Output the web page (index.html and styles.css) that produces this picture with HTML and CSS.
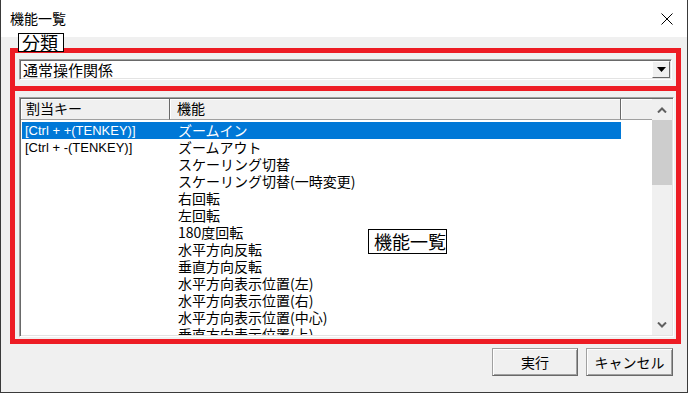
FILE: index.html
```html
<!DOCTYPE html>
<html lang="ja">
<head>
    <meta charset="UTF-8">
    <title>機能一覧</title>
    <link rel="stylesheet" href="styles.css">
</head>
<body>
    <div class="window">
        <div class="titlebar">
            <span class="title">機能一覧</span>
            <svg class="close" width="12" height="12" viewBox="0 0 12 12">
                <path d="M0.5 0.5 L11.5 11.5 M11.5 0.5 L0.5 11.5" stroke="#000" stroke-width="1" fill="none"/>
            </svg>
        </div>

        <div class="content">
            <div class="red-box red-top">
                <div class="combo">
                    <span class="combo-text">通常操作関係</span>
                    <span class="combo-btn">
                        <svg width="9" height="5" viewBox="0 0 9 5"><path d="M0 0 H9 L4.5 5 Z" fill="#000"/></svg>
                    </span>
                </div>
            </div>

            <div class="red-box red-bottom">
                <div class="listview">
                    <div class="list-main">
                        <div class="list-header">
                            <div class="hcol hcol-key">割当キー</div>
                            <div class="hcol hcol-func">機能</div>
                            <div class="hcol hcol-rest"></div>
                        </div>
                        <div class="rows">
                            <div class="row selected"><span class="key">[Ctrl + +(TENKEY)]</span><span class="func">ズームイン</span></div>
                            <div class="row"><span class="key">[Ctrl + -(TENKEY)]</span><span class="func">ズームアウト</span></div>
                            <div class="row"><span class="key"></span><span class="func">スケーリング切替</span></div>
                            <div class="row"><span class="key"></span><span class="func">スケーリング切替(一時変更)</span></div>
                            <div class="row"><span class="key"></span><span class="func">右回転</span></div>
                            <div class="row"><span class="key"></span><span class="func">左回転</span></div>
                            <div class="row"><span class="key"></span><span class="func">180度回転</span></div>
                            <div class="row"><span class="key"></span><span class="func">水平方向反転</span></div>
                            <div class="row"><span class="key"></span><span class="func">垂直方向反転</span></div>
                            <div class="row"><span class="key"></span><span class="func">水平方向表示位置(左)</span></div>
                            <div class="row"><span class="key"></span><span class="func">水平方向表示位置(右)</span></div>
                            <div class="row"><span class="key"></span><span class="func">水平方向表示位置(中心)</span></div>
                            <div class="row"><span class="key"></span><span class="func">垂直方向表示位置(上)</span></div>
                        </div>
                    </div>
                    <div class="scrollbar">
                        <div class="sb-btn">
                            <svg width="10" height="6" viewBox="0 0 10 6"><path d="M1 5.5 L5 1.5 L9 5.5" stroke="#606060" stroke-width="2" fill="none"/></svg>
                        </div>
                        <div class="sb-thumb"></div>
                        <div class="sb-track"></div>
                        <div class="sb-btn">
                            <svg width="10" height="6" viewBox="0 0 10 6"><path d="M1 0.5 L5 4.5 L9 0.5" stroke="#606060" stroke-width="2" fill="none"/></svg>
                        </div>
                    </div>
                </div>
            </div>

            <div class="buttons">
                <button class="btn btn-run">実行</button>
                <button class="btn btn-cancel">キャンセル</button>
            </div>
        </div>

        <div class="tag tag-group">分類</div>
        <div class="tag tag-list">機能一覧</div>
    </div>
</body>
</html>
```

FILE: styles.css
```css
body {
    margin: 0;
    background: #f0f0f0;
    font-family: "Noto Sans CJK JP", sans-serif;
    color: #000;
}
.window {
    position: relative;
    width: 688px;
    height: 393px;
    box-sizing: border-box;
    border-left: 1px solid #3a3a3a;
    border-right: 1px solid #3a3a3a;
    border-bottom: 1px solid #3a3a3a;
    background: #f0f0f0;
    overflow: hidden;
}
.titlebar {
    height: 37px;
    background: #fff;
    display: flex;
    align-items: center;
    justify-content: space-between;
    padding: 0 14px 0 9px;
}
.title {
    font-size: 14px;
    line-height: 37px;
    padding-bottom: 1px;
}
.close {
    display: block;
}
.content {
    padding: 11px 6px 0 9px;
}
.red-box {
    width: 671px;
    box-sizing: border-box;
    border: 5px solid #ed1c24;
}
.red-top {
    height: 43px;
    padding: 6px 4px 0 4px;
}
.red-bottom {
    height: 253px;
    border-top: 0;
    padding: 6px 2px 2px 4px;
}
.combo {
    height: 21px;
    box-sizing: border-box;
    background: #fff;
    border: 1px solid;
    border-color: #a0a0a0 #fff #fff #a0a0a0;
    box-shadow: inset 1px 1px 0 #696969, inset -1px -1px 0 #e3e3e3;
    display: flex;
    align-items: center;
    justify-content: space-between;
    padding: 0 1px 0 3px;
}
.combo-text {
    font-size: 15px;
    line-height: 19px;
}
.combo-btn {
    width: 18px;
    height: 17px;
    box-sizing: border-box;
    background: #f0f0f0;
    border: 1px solid;
    border-color: #fff #696969 #696969 #fff;
    display: flex;
    align-items: center;
    justify-content: center;
}
.listview {
    height: 240px;
    box-sizing: border-box;
    background: #fff;
    border: 1px solid;
    border-color: #a0a0a0 #fff #fff #a0a0a0;
    box-shadow: inset 1px 1px 0 #696969, inset -1px -1px 0 #e3e3e3;
    padding: 1px;
    display: flex;
}
.list-main {
    width: 631px;
    display: flex;
    flex-direction: column;
    overflow: hidden;
}
.list-header {
    display: flex;
    height: 21px;
    flex-shrink: 0;
}
.hcol {
    box-sizing: border-box;
    height: 21px;
    background: #f0f0f0;
    border-right: 1px solid #696969;
    border-bottom: 1px solid #a0a0a0;
    box-shadow: inset 1px 1px 0 #fff;
    font-size: 14px;
    line-height: 19px;
    padding-left: 5px;
}
.hcol-key {
    width: 149px;
}
.hcol-func {
    width: 451px;
    padding-left: 7px;
}
.hcol-rest {
    width: 31px;
    border-right: 0;
}
.rows {
    padding-top: 2px;
}
.row {
    display: flex;
    height: 17px;
    width: 599px;
    margin-left: 1px;
    line-height: 17px;
    white-space: nowrap;
}
.row.selected {
    background: #0078d7;
    color: #fff;
}
.key {
    width: 153px;
    padding-left: 3px;
    font-family: "Liberation Sans", "Noto Sans CJK JP", sans-serif;
    font-size: 13px;
}
.func {
    font-size: 14px;
}
.scrollbar {
    width: 20px;
    background: #f0f0f0;
    display: flex;
    flex-direction: column;
}
.sb-btn {
    height: 21px;
    display: flex;
    align-items: center;
    justify-content: center;
}
.sb-thumb {
    height: 65px;
    background: #cdcdcd;
}
.sb-track {
    flex: 1;
}
.buttons {
    display: flex;
    justify-content: flex-end;
    gap: 8px;
    width: 671px;
    padding-right: 8px;
    box-sizing: border-box;
    margin-top: 4px;
}
.btn {
    height: 28px;
    box-sizing: border-box;
    background: #f0f0f0;
    border: 1px solid;
    border-color: #a0a0a0 #696969 #696969 #a0a0a0;
    box-shadow: inset 1px 1px 0 #fff, inset -1px -1px 0 #a0a0a0;
    font-family: "Noto Sans CJK JP", sans-serif;
    font-size: 14px;
    color: #000;
    padding: 0;
}
.btn-run {
    width: 86px;
}
.btn-cancel {
    width: 87px;
}
.tag {
    position: absolute;
    box-sizing: border-box;
    background: #fff;
    border: 1px solid #000;
    font-size: 18px;
}
.tag-group {
    left: 17px;
    top: 33px;
    width: 46px;
    height: 19px;
    line-height: 16px;
    padding-left: 3px;
}
.tag-list {
    left: 367px;
    top: 229px;
    width: 79px;
    height: 25px;
    line-height: 22px;
    padding-left: 5px;
}
```
